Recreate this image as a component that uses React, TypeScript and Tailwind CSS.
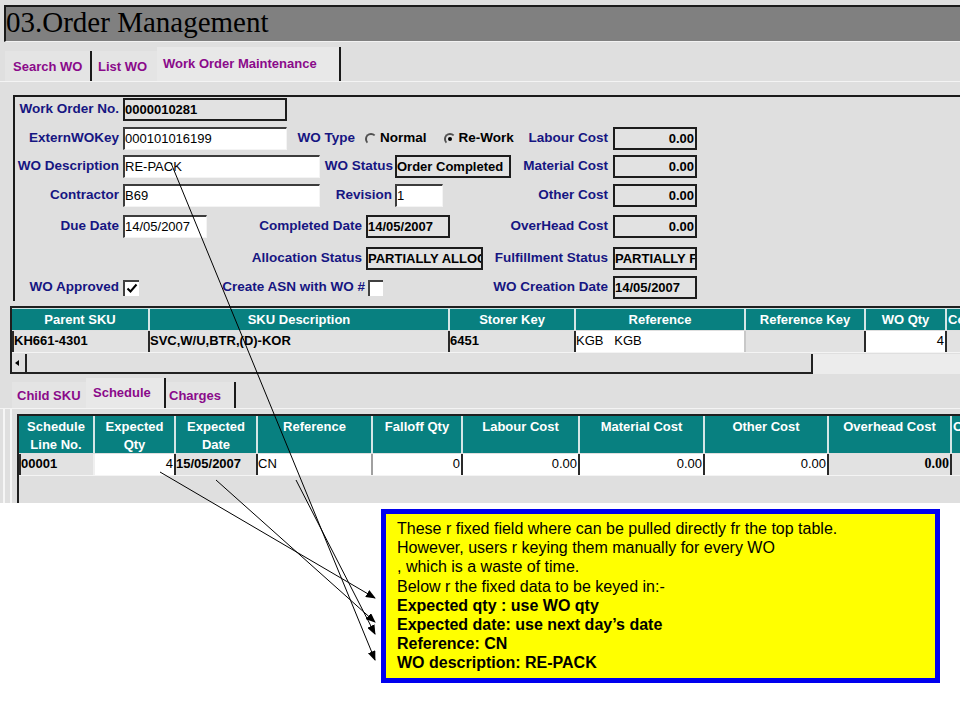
import React from "react"

type Kids = { className?: string; children?: React.ReactNode }

const Lbl = ({ className = "", children }: Kids) => (
  <div className={`shrink-0 text-right whitespace-nowrap text-[13.5px] font-bold text-[#161682] ${className}`}>{children}</div>
)

const Field = ({ className = "", ro = false, right = false, children }: Kids & { ro?: boolean; right?: boolean }) => (
  <div
    className={`shrink-0 h-[23px] overflow-hidden whitespace-nowrap text-[13px] text-black ${
      ro
        ? "bg-[#e2e2e2] border-2 border-[#1c1c1c] font-bold leading-[19px]"
        : "bg-white border-t-2 border-l-2 border-r border-b border-t-[#3c3c3c] border-l-[#3c3c3c] border-r-[#f4f4f4] border-b-[#f4f4f4] leading-[20px]"
    } ${right ? "text-right pr-[1px]" : ""} ${className}`}
  >
    {children}
  </div>
)

const Radio = ({ on = false }: { on?: boolean }) => (
  <span className="relative inline-block shrink-0 w-[12px] h-[12px] rounded-full border-2 border-t-[#505050] border-l-[#505050] border-r-transparent border-b-transparent">
    {on && <span className="absolute left-[2px] top-[2px] w-[4px] h-[4px] rounded-full bg-black" />}
  </span>
)

const Check = ({ on = false, className = "" }: { on?: boolean; className?: string }) => (
  <div className={`shrink-0 h-[16px] bg-white border-t-2 border-l-2 border-[#404040] flex items-center justify-center ${className}`}>
    {on && (
      <svg width="12" height="11" viewBox="0 0 12 11">
        <polyline points="1.5,5.5 4.5,8.5 10.5,1.5" fill="none" stroke="black" strokeWidth="2" />
      </svg>
    )}
  </div>
)

const topCols = [
  { w: "w-[136px]", t: "Parent SKU" },
  { w: "w-[300px]", t: "SKU Description" },
  { w: "w-[126px]", t: "Storer Key" },
  { w: "w-[170px]", t: "Reference" },
  { w: "w-[120px]", t: "Reference Key" },
  { w: "w-[81px]", t: "WO Qty" },
]

const schedCols = [
  { w: "w-[74px]", t: ["Schedule", "Line No."] },
  { w: "w-[81px]", t: ["Expected", "Qty"] },
  { w: "w-[82px]", t: ["Expected", "Date"] },
  { w: "w-[115px]", t: ["Reference"] },
  { w: "w-[90px]", t: ["Falloff Qty"] },
  { w: "w-[117px]", t: ["Labour Cost"] },
  { w: "w-[125px]", t: ["Material Cost"] },
  { w: "w-[124px]", t: ["Other Cost"] },
  { w: "w-[123px]", t: ["Overhead Cost"] },
]

const cell = "shrink-0 h-full border-l-2 border-[#2a2a2a] overflow-hidden whitespace-nowrap text-[13px] leading-[19px] text-black"
const tab = "leading-[16px] text-[13px] font-bold text-[#8a0a8a]"

export default function App() {
  return (
    <div className="relative w-[960px] h-[720px] overflow-hidden bg-white font-['Liberation_Sans',Arial,sans-serif]">
      <div className="h-[503px] overflow-hidden bg-[#dfdfdf] pt-[5px] flex flex-col">
        {/* title bar */}
        <div className="ml-[4px] h-[37px] shrink-0 bg-[#808080] border-t-2 border-l-2 border-[#1a1a1a] border-b border-b-[#f2f2f2] pt-[1px]">
          <span className="font-['Liberation_Serif',serif] text-[29px] leading-[29px] text-black">03.Order Management</span>
        </div>

        {/* main tabs */}
        <div className="h-[40px] shrink-0 flex items-end pl-[5px] border-b border-[#f4f4f4]">
          <div className={`h-[30px] w-[87px] border-r-2 border-[#1a1a1a] pl-[8px] pt-[8px] bg-[#e4e4e4] ${tab}`}>Search WO</div>
          <div className={`h-[30px] w-[65px] pl-[6px] pt-[8px] bg-[#e4e4e4] ${tab}`}>List WO</div>
          <div className={`h-[34px] w-[184px] border-r-2 border-[#1a1a1a] pl-[6px] pt-[9px] bg-[#e8e8e8] ${tab}`}>Work Order Maintenance</div>
        </div>

        {/* form */}
        <div className="ml-[13px] mt-[13px] shrink-0 border-l-2 border-t-2 border-[#1a1a1a] pb-[2px]">
          <div className="mt-[1px] flex items-center h-[23px]">
            <Lbl className="w-[104px]">Work Order No.</Lbl>
            <Field ro className="ml-[4px] w-[164px]">0000010281</Field>
          </div>
          <div className="mt-[6px] flex items-center h-[23px]">
            <Lbl className="w-[104px]">ExternWOKey</Lbl>
            <Field className="ml-[4px] w-[164px]">000101016199</Field>
            <Lbl className="w-[68px]">WO Type</Lbl>
            <div className="w-[166px] shrink-0 flex items-center pl-[10px] text-[13.5px] font-bold text-black">
              <Radio />
              <span className="ml-[3px]">Normal</span>
              <span className="ml-[17px] flex items-center">
                <Radio on />
              </span>
              <span className="ml-[3px]">Re-Work</span>
            </div>
            <Lbl className="w-[87px]">Labour Cost</Lbl>
            <Field ro right className="ml-[5px] w-[84px]">0.00</Field>
          </div>
          <div className="mt-[5px] flex items-center h-[23px]">
            <Lbl className="w-[104px]">WO Description</Lbl>
            <Field className="ml-[4px] w-[197px]">RE-PACK</Field>
            <Lbl className="w-[73px]">WO Status</Lbl>
            <Field ro className="ml-[2px] w-[116px]">Order Completed</Field>
            <Lbl className="w-[97px]">Material Cost</Lbl>
            <Field ro right className="ml-[5px] w-[84px]">0.00</Field>
          </div>
          <div className="mt-[6px] flex items-center h-[23px]">
            <Lbl className="w-[104px]">Contractor</Lbl>
            <Field className="ml-[4px] w-[197px]">B69</Field>
            <Lbl className="w-[72px]">Revision</Lbl>
            <Field className="ml-[3px] w-[48px]">1</Field>
            <Lbl className="w-[165px]">Other Cost</Lbl>
            <Field ro right className="ml-[5px] w-[84px]">0.00</Field>
          </div>
          <div className="mt-[8px] flex items-center h-[23px]">
            <Lbl className="w-[104px]">Due Date</Lbl>
            <Field className="ml-[4px] w-[84px]">14/05/2007</Field>
            <Lbl className="w-[155px]">Completed Date</Lbl>
            <Field ro className="ml-[4px] w-[84px]">14/05/2007</Field>
            <Lbl className="w-[158px]">OverHead Cost</Lbl>
            <Field ro right className="ml-[5px] w-[84px]">0.00</Field>
          </div>
          <div className="mt-[9px] flex items-center h-[23px]">
            <Lbl className="w-[347px]">Allocation Status</Lbl>
            <Field ro className="ml-[4px] w-[117px]">PARTIALLY ALLOCATED</Field>
            <Lbl className="w-[125px]">Fulfillment Status</Lbl>
            <Field ro className="ml-[5px] w-[84px]">PARTIALLY FULFILLED</Field>
          </div>
          <div className="mt-[6px] flex items-center h-[23px]">
            <Lbl className="w-[104px]">WO Approved</Lbl>
            <Check on className="ml-[4px] w-[16px]" />
            <Lbl className="w-[226px]">Create ASN with WO #</Lbl>
            <Check className="ml-[3px] w-[15px]" />
            <Lbl className="w-[225px]">WO Creation Date</Lbl>
            <Field ro className="ml-[5px] w-[84px]">14/05/2007</Field>
          </div>
        </div>

        {/* parent sku table */}
        <div className="ml-[10px] mt-[5px] shrink-0 border-t-2 border-l-2 border-[#1e1e1e]">
          <div className="flex h-[22px] bg-[#088080] border-t border-[#cfe3e3]">
            {topCols.map((c, i) => (
              <div key={c.t} className={`${c.w} shrink-0 flex items-center justify-center text-[13px] font-bold text-white ${i ? "border-l-2 border-[#d4e6e6]" : ""}`}>
                {c.t}
              </div>
            ))}
            <div className="w-[200px] shrink-0 border-l-2 border-[#d4e6e6] pl-[1px] flex items-center text-[13px] font-bold text-white">Comments</div>
          </div>
          <div className="flex h-[22px] mt-[1px] border-b border-[#f4f4f4]">
            <div className={`${cell} w-[136px] bg-[#e2e2e2] font-bold`}>KH661-4301</div>
            <div className={`${cell} w-[300px] bg-[#e2e2e2] font-bold`}>SVC,W/U,BTR,(D)-KOR</div>
            <div className={`${cell} w-[126px] bg-[#e2e2e2] font-bold`}>6451</div>
            <div className={`${cell} w-[170px] bg-white whitespace-pre`}>KGB   KGB</div>
            <div className={`${cell} w-[120px] bg-[#e2e2e2] border-l-[#c8c8c8]`}></div>
            <div className={`${cell} w-[81px] bg-white text-right pr-[1px]`}>4</div>
            <div className={`${cell} w-[200px] bg-[#e2e2e2]`}></div>
          </div>
          <div className="flex h-[20px] mt-[1px]">
            <div className="w-[15px] shrink-0 border-r-2 border-b-2 border-[#222] flex items-center pl-[3px]">
              <svg width="4" height="6" viewBox="0 0 4 6">
                <polygon points="4,0 0,3 4,6" fill="black" />
              </svg>
            </div>
            <div className="w-[786px] shrink-0 border-r-2 border-b-2 border-[#222] bg-[#e0e0e0]" />
            <div className="flex-1 bg-[#ececec]" />
          </div>
        </div>

        {/* sub tabs */}
        <div className="h-[35px] shrink-0 flex items-end pl-[12px] border-b border-[#f4f4f4]">
          <div className={`h-[26px] w-[74px] pl-[5px] pt-[6px] bg-[#e4e4e4] ${tab}`}>Child SKU</div>
          <div className={`h-[30px] w-[80px] border-r-2 border-[#1a1a1a] pl-[7px] pt-[7px] bg-[#e8e8e8] ${tab}`}>Schedule</div>
          <div className={`h-[26px] w-[70px] border-r-2 border-[#1a1a1a] pl-[3px] pt-[6px] bg-[#e4e4e4] ${tab}`}>Charges</div>
        </div>

        <div className="flex-1 ml-[3px] border-l-2 border-[#f6f6f6]">
          <div className="h-full ml-[5px] border-l-2 border-[#f6f6f6] pt-[5px]">
            <div className="h-full ml-[5px] border-t-2 border-l-2 border-[#1e1e1e]">
              <div className="flex h-[37px] bg-[#088080]">
                {schedCols.map((c, i) => (
                  <div key={c.t.join()} className={`${c.w} shrink-0 pt-[2px] text-center leading-[18px] text-[13px] font-bold text-white ${i ? "border-l-2 border-[#d4e6e6]" : ""}`}>
                    {c.t.map((l) => (
                      <div key={l}>{l}</div>
                    ))}
                  </div>
                ))}
                <div className="w-[120px] shrink-0 border-l-2 border-[#d4e6e6] pt-[2px] pl-[1px] leading-[18px] text-[13px] font-bold text-white">Other</div>
              </div>
              <div className="flex h-[22px] mt-[1px] border-b border-[#f4f4f4]">
                <div className={`${cell} w-[74px] bg-[#e2e2e2] font-bold border-l-0`}>00001</div>
                <div className={`${cell} w-[81px] bg-white text-right pr-[1px] border-l-[#f0f0f0]`}>4</div>
                <div className={`${cell} w-[82px] bg-[#e2e2e2] font-bold`}>15/05/2007</div>
                <div className={`${cell} w-[115px] bg-white`}>CN</div>
                <div className={`${cell} w-[90px] bg-white text-right pr-[1px] border-l-[#a0a0a0]`}>0</div>
                <div className={`${cell} w-[117px] bg-white text-right pr-[1px]`}>0.00</div>
                <div className={`${cell} w-[125px] bg-white text-right pr-[1px]`}>0.00</div>
                <div className={`${cell} w-[124px] bg-white text-right pr-[1px]`}>0.00</div>
                <div className={`${cell} w-[123px] bg-[#e2e2e2] text-right pr-[1px] font-bold text-[14px] font-['Liberation_Serif',serif]`}>0.00</div>
                <div className={`${cell} w-[120px] bg-[#e2e2e2]`}></div>
              </div>
            </div>
          </div>
        </div>
      </div>

      {/* callout */}
      <div className="ml-[381px] mt-[6px] w-[559px] h-[174px] border-[5px] border-[#0000ee] bg-[#ffff00] pl-[11px] pt-[5px] text-[16px] leading-[19.2px] text-black">
        <div>These r fixed field where can be pulled directly fr the top table.</div>
        <div>However, users r keying them manually for every WO</div>
        <div>, which is a waste of time.</div>
        <div>Below r the fixed data to be keyed in:-</div>
        <div className="font-bold">Expected qty : use WO qty</div>
        <div className="font-bold">Expected date: use next day’s date</div>
        <div className="font-bold">Reference: CN</div>
        <div className="font-bold">WO description: RE-PACK</div>
      </div>

      {/* arrows */}
      <svg className="absolute inset-0 pointer-events-none" width="960" height="720" viewBox="0 0 960 720">
        <defs>
          <marker id="ah" markerWidth="10" markerHeight="8" refX="9" refY="4" orient="auto" markerUnits="userSpaceOnUse">
            <polygon points="0,0 10,4 0,8" fill="black" />
          </marker>
        </defs>
        <line x1="160" y1="472" x2="375" y2="598" stroke="black" strokeWidth="1" markerEnd="url(#ah)" />
        <line x1="216" y1="480" x2="375" y2="622" stroke="black" strokeWidth="1" markerEnd="url(#ah)" />
        <line x1="296" y1="480" x2="375" y2="634" stroke="black" strokeWidth="1" markerEnd="url(#ah)" />
        <line x1="171" y1="163" x2="375" y2="660" stroke="black" strokeWidth="1" markerEnd="url(#ah)" />
      </svg>
    </div>
  )
}
